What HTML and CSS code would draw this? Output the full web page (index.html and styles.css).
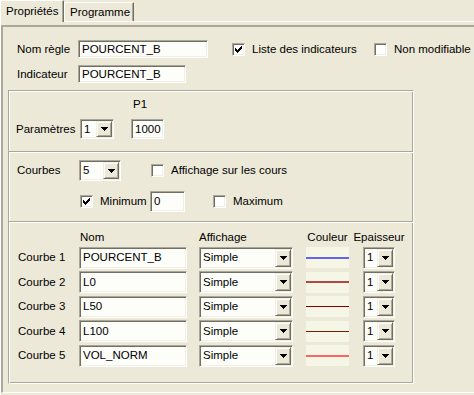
FILE: index.html
```html
<!DOCTYPE html>
<html lang="fr">
<head>
<meta charset="utf-8">
<title>Propriétés</title>
<link rel="stylesheet" href="styles.css">
</head>
<body>
<div class="tabs">
  <div class="tab active">Propriétés</div>
  <div class="tab">Programme</div>
</div>
<div class="panel">
  <div class="frame">
    <div class="row row-name">
      <span class="lbl lbl-top">Nom règle</span>
      <div class="field w-name">POURCENT_B</div>
      <div class="chk chk-liste"><span class="box"><svg width="7" height="7" viewBox="0 0 7 7"><path d="M6 0h1v3h-1v1h-1v1h-1v1h-1v1h-1v-1h-1v-1h-1v-3h1v1h1v1h1v-1h1v-1h1z"/></svg></span><span class="chk-text">Liste des indicateurs</span></div>
      <div class="chk"><span class="box"></span><span class="chk-text">Non modifiable</span></div>
    </div>
    <div class="row row-ind">
      <span class="lbl lbl-top">Indicateur</span>
      <div class="field w-ind">POURCENT_B</div>
    </div>

    <div class="group">
      <div class="section sec-params">
        <span class="p1-head">P1</span>
        <span class="lbl lbl-params">Paramètres</span>
        <div class="combo w-params"><span class="combo-val">1</span><span class="combo-btn"><svg width="7" height="4" viewBox="0 0 7 4"><path d="M0 0h7v1h-1v1h-1v1h-1v1h-1v-1h-1v-1h-1v-1h-1z"/></svg></span></div>
        <div class="field w-p1">1000</div>
      </div>

      <div class="section sec-courbes">
        <div class="row row-courbes">
          <span class="lbl lbl-courbes">Courbes</span>
          <div class="combo w-courbes"><span class="combo-val">5</span><span class="combo-btn"><svg width="7" height="4" viewBox="0 0 7 4"><path d="M0 0h7v1h-1v1h-1v1h-1v1h-1v-1h-1v-1h-1v-1h-1z"/></svg></span></div>
          <div class="chk chk-aff"><span class="box"></span><span class="chk-text">Affichage sur les cours</span></div>
        </div>
        <div class="row row-min">
          <div class="chk chk-min"><span class="box"><svg width="7" height="7" viewBox="0 0 7 7"><path d="M6 0h1v3h-1v1h-1v1h-1v1h-1v1h-1v-1h-1v-1h-1v-3h1v1h1v1h1v-1h1v-1h1z"/></svg></span><span class="chk-text">Minimum</span></div>
          <div class="field w-min">0</div>
          <div class="chk chk-max"><span class="box"></span><span class="chk-text">Maximum</span></div>
        </div>
      </div>

      <div class="section sec-table">
        <div class="table">
          <span></span>
          <span class="th th-nom">Nom</span>
          <span class="th th-aff">Affichage</span>
          <span class="th th-center">Couleur</span>
          <span class="th th-center">Epaisseur</span>

          <span class="lbl">Courbe 1</span>
          <div class="field">POURCENT_B</div>
          <div class="combo"><span class="combo-val">Simple</span><span class="combo-btn"><svg width="7" height="4" viewBox="0 0 7 4"><path d="M0 0h7v1h-1v1h-1v1h-1v1h-1v-1h-1v-1h-1v-1h-1z"/></svg></span></div>
          <div class="swatch"><span class="line line-blue"></span></div>
          <div class="combo"><span class="combo-val">1</span><span class="combo-btn"><svg width="7" height="4" viewBox="0 0 7 4"><path d="M0 0h7v1h-1v1h-1v1h-1v1h-1v-1h-1v-1h-1v-1h-1z"/></svg></span></div>

          <span class="lbl">Courbe 2</span>
          <div class="field">L0</div>
          <div class="combo"><span class="combo-val">Simple</span><span class="combo-btn"><svg width="7" height="4" viewBox="0 0 7 4"><path d="M0 0h7v1h-1v1h-1v1h-1v1h-1v-1h-1v-1h-1v-1h-1z"/></svg></span></div>
          <div class="swatch"><span class="line line-red"></span></div>
          <div class="combo"><span class="combo-val">1</span><span class="combo-btn"><svg width="7" height="4" viewBox="0 0 7 4"><path d="M0 0h7v1h-1v1h-1v1h-1v1h-1v-1h-1v-1h-1v-1h-1z"/></svg></span></div>

          <span class="lbl">Courbe 3</span>
          <div class="field">L50</div>
          <div class="combo"><span class="combo-val">Simple</span><span class="combo-btn"><svg width="7" height="4" viewBox="0 0 7 4"><path d="M0 0h7v1h-1v1h-1v1h-1v1h-1v-1h-1v-1h-1v-1h-1z"/></svg></span></div>
          <div class="swatch"><span class="line line-dark"></span></div>
          <div class="combo"><span class="combo-val">1</span><span class="combo-btn"><svg width="7" height="4" viewBox="0 0 7 4"><path d="M0 0h7v1h-1v1h-1v1h-1v1h-1v-1h-1v-1h-1v-1h-1z"/></svg></span></div>

          <span class="lbl">Courbe 4</span>
          <div class="field">L100</div>
          <div class="combo"><span class="combo-val">Simple</span><span class="combo-btn"><svg width="7" height="4" viewBox="0 0 7 4"><path d="M0 0h7v1h-1v1h-1v1h-1v1h-1v-1h-1v-1h-1v-1h-1z"/></svg></span></div>
          <div class="swatch"><span class="line line-brown"></span></div>
          <div class="combo"><span class="combo-val">1</span><span class="combo-btn"><svg width="7" height="4" viewBox="0 0 7 4"><path d="M0 0h7v1h-1v1h-1v1h-1v1h-1v-1h-1v-1h-1v-1h-1z"/></svg></span></div>

          <span class="lbl">Courbe 5</span>
          <div class="field">VOL_NORM</div>
          <div class="combo"><span class="combo-val">Simple</span><span class="combo-btn"><svg width="7" height="4" viewBox="0 0 7 4"><path d="M0 0h7v1h-1v1h-1v1h-1v1h-1v-1h-1v-1h-1v-1h-1z"/></svg></span></div>
          <div class="swatch"><span class="line line-salmon"></span></div>
          <div class="combo"><span class="combo-val">1</span><span class="combo-btn"><svg width="7" height="4" viewBox="0 0 7 4"><path d="M0 0h7v1h-1v1h-1v1h-1v1h-1v-1h-1v-1h-1v-1h-1z"/></svg></span></div>
        </div>
      </div>
    </div>
  </div>
</div>
</body>
</html>
```
FILE: styles.css
```css
* { box-sizing: border-box; }

html, body {
  margin: 0;
  padding: 0;
}

body {
  width: 474px;
  height: 395px;
  overflow: hidden;
  background: #ece9d8;
  color: #000;
  font-family: "Liberation Sans", Arial, sans-serif;
  font-size: 11.5px;
  line-height: 13px;
}

/* ---------- tabs ---------- */
.tabs {
  display: flex;
  align-items: flex-end;
  height: 21px;
}

.tab {
  height: 19px;
  width: 70px;
  padding-left: 5px;
  line-height: 19px;
  border-top: 1px solid #fff;
  border-left: 1px solid #fff;
  border-right: 1px solid #716f64;
  box-shadow: inset -1px 0 0 #aca899;
  background: #ece9d8;
}

.tab.active {
  height: 22px;
  width: 64px;
  line-height: 20px;
  margin-bottom: -1px;
  position: relative;
  z-index: 1;
}

/* ---------- panel ---------- */
.panel {
  border-top: 1px solid #fff;
  border-left: 1px solid #fff;
  padding-top: 3px;
  height: 374px;
}

.frame {
  height: 368px;
  border-top: 2px solid #aca899;
  border-left: 2px solid #aca899;
  border-bottom: 1px solid #fff;
  padding-left: 0;
}

.row {
  display: flex;
  align-items: center;
}

.lbl { white-space: nowrap; }

.row-name {
  margin-top: 13px;
  height: 18px;
  padding-left: 14px;
}

.row-ind {
  margin-top: 7px;
  height: 18px;
  padding-left: 14px;
}

.lbl-top { width: 61px; }

/* ---------- fields ---------- */
.field {
  height: 100%;
  background: #fdfdf9;
  border: 1px solid;
  border-color: #aca899 #fff #fff #aca899;
  box-shadow: inset 1px 1px 0 #716f64, inset -1px -1px 0 #f1efe2;
  padding: 0 0 0 3px;
  display: flex;
  align-items: center;
  white-space: nowrap;
  overflow: hidden;
}

.w-name { width: 130px; }
.w-ind { width: 108px; }

/* ---------- checkboxes ---------- */
.chk {
  display: flex;
  align-items: center;
  white-space: nowrap;
}

.box {
  width: 13px;
  height: 13px;
  flex: none;
  background: #fff;
  border: 1px solid;
  border-color: #aca899 #fff #fff #aca899;
  box-shadow: inset 1px 1px 0 #716f64, inset -1px -1px 0 #f1efe2;
  display: flex;
  align-items: center;
  justify-content: center;
}

.box svg { display: block; fill: #000; shape-rendering: crispEdges; }

.chk-text { margin-left: 7px; }

.chk-liste { margin-left: 24px; width: 142px; }

/* ---------- group box ---------- */
.group {
  margin-top: 7px;
  margin-left: 5px;
  width: 406px;
  height: 294px;
  border: 1px solid;
  border-color: #aca899 #fff #fff #aca899;
  box-shadow: inset 1px 1px 0 #fff, inset -1px -1px 0 #aca899;
}

.section {
  padding-left: 6px;
}

.sec-params {
  height: 60px;
  margin-top: 1px;
  border-bottom: 1px solid #aca899;
  display: grid;
  grid-template-columns: 64px 34px 17px 33px;
  grid-template-rows: 13px 20px;
  row-gap: 8px;
  align-content: start;
  padding-top: 6px;
  padding-left: 7px;
}

.p1-head {
  grid-column: 4;
  grid-row: 1;
  padding-left: 2px;
}

.lbl-params {
  grid-column: 1;
  grid-row: 2;
  align-self: center;
}

.sec-params .combo { grid-column: 2; grid-row: 2; }
.sec-params .field { grid-column: 4; grid-row: 2; }

.sec-courbes {
  height: 70px;
  border-top: 1px solid #fff;
  border-bottom: 1px solid #aca899;
  padding-left: 8px;
}

.row-courbes {
  margin-top: 7px;
  height: 21px;
}

.lbl-courbes { width: 62px; }
.w-courbes { width: 42px; }
.chk-aff { margin-left: 30px; }

.row-min {
  margin-top: 10px;
  height: 21px;
  padding-left: 63px;
}

.chk-min { width: 70px; }
.w-min { width: 35px; }
.chk-max { margin-left: 28px; }

.w-params { width: 34px; }

/* ---------- combos ---------- */
.combo {
  height: 100%;
  display: flex;
  align-items: stretch;
  background: #fdfdf9;
  border: 1px solid;
  border-color: #aca899 #fff #fff #aca899;
  box-shadow: inset 1px 1px 0 #716f64, inset -1px -1px 0 #f1efe2;
  padding: 1px 1px 1px 1px;
}

.combo-val {
  flex: 1;
  padding-left: 2px;
  display: flex;
  align-items: center;
  white-space: nowrap;
  overflow: hidden;
}

.combo-btn {
  flex: none;
  width: 16px;
  background: #ece9d8;
  border: 1px solid;
  border-color: #f1efe2 #716f64 #716f64 #f1efe2;
  box-shadow: inset 1px 1px 0 #fff, inset -1px -1px 0 #aca899;
  display: flex;
  align-items: center;
  justify-content: center;
}

.combo-btn svg { display: block; fill: #000; shape-rendering: crispEdges; }

/* ---------- table ---------- */
.sec-table {
  border-top: 1px solid #fff;
  padding-top: 8px;
  padding-left: 9px;
}

.table {
  display: grid;
  grid-template-columns: 61px 108px 94px 43px 32px;
  column-gap: 0;
  grid-template-rows: 13px repeat(5, 22px);
  row-gap: 2.5px;
  align-items: center;
}

.table > .combo:nth-child(5n+3) { margin-left: 12px; width: 94px; }
.table { grid-template-columns: 61px 108px 106px 56px 46px; }
.table > .swatch { margin-left: 13px; width: 43px; }
.table > .combo:nth-child(5n) { margin-left: 14px; width: 32px; }

.th { white-space: nowrap; }
.th-nom { padding-left: 1px; align-self: end; }
.th-aff { padding-left: 12px; align-self: end; }
.th-center { justify-self: center; align-self: end; }
.table > .th-center:nth-child(4) { margin-left: 13px; }
.table > .th-center:nth-child(5) { margin-left: 14px; }

.swatch {
  height: 21px;
  background: #f6f6e6;
  display: flex;
  align-items: center;
}

.line {
  display: block;
  width: 100%;
  height: 1px;
}

.line-blue { height: 2px; background: #6464ee; }
.line-red { height: 2px; background: #b04848; }
.line-dark { background: #800000; }
.line-brown { background: #7a1a00; }
.line-salmon { height: 2px; background: #ff6464; }
```
